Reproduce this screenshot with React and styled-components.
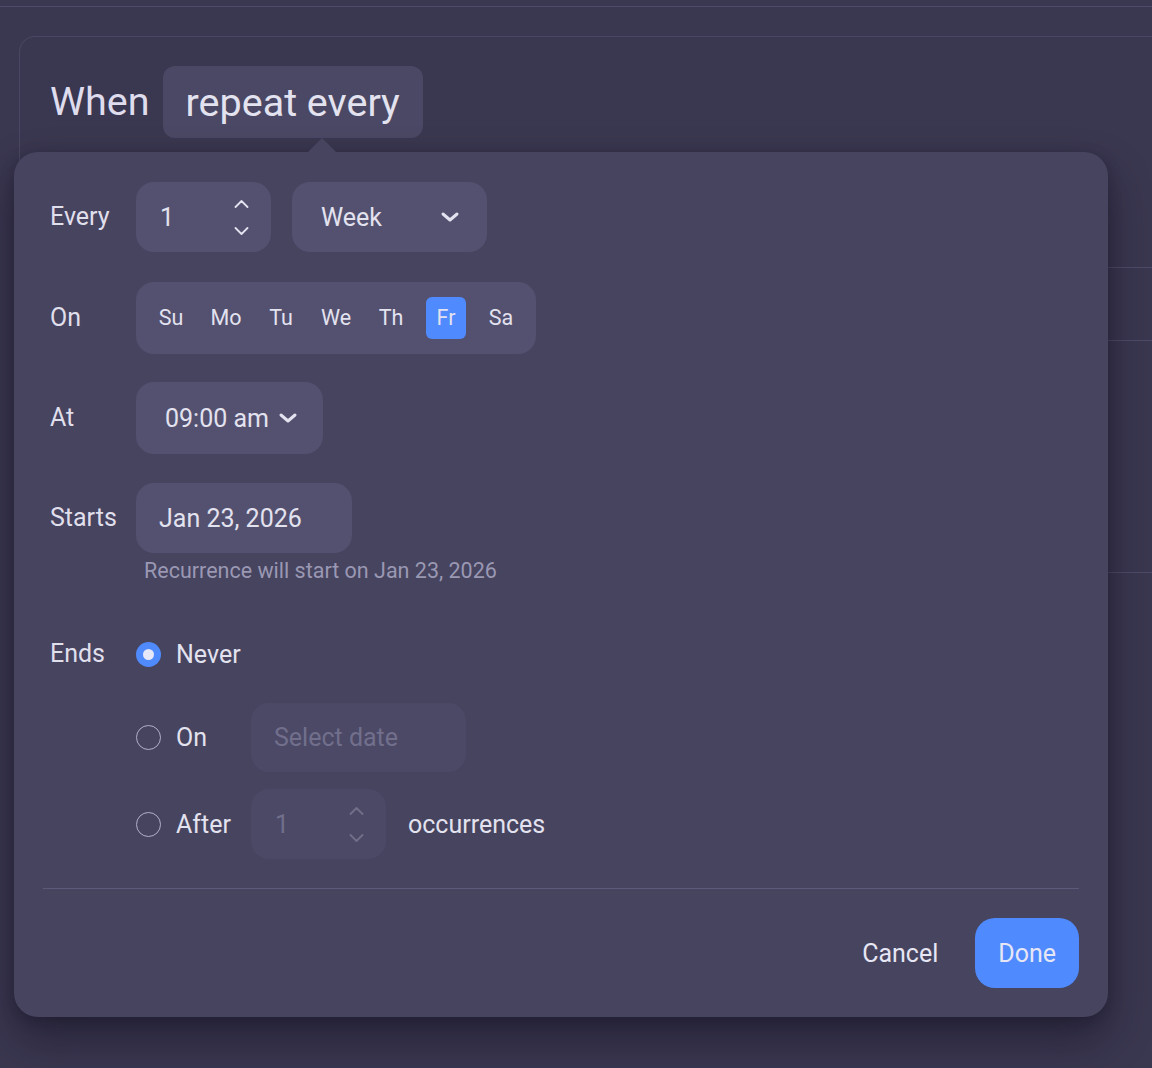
import React from 'react';
import styled, { createGlobalStyle } from 'styled-components';

const GlobalStyle = createGlobalStyle`
  html, body {
    margin: 0;
    padding: 0;
    background: #3a3750;
    font-family: Roboto, "Noto Sans", sans-serif;
    color: #e3e2ef;
  }
`;

const Page = styled.div`
  position: relative;
  width: 1152px;
  height: 1068px;
  overflow: hidden;
  background: #3a3750;
`;

const TopBar = styled.div`
  height: 6px;
  border-bottom: 1px solid #4f4c69;
`;

const Card = styled.section`
  margin: 29px 0 0 19px;
  border: 1px solid #4a4764;
  border-right: none;
  border-bottom: none;
  border-radius: 16px 0 0 0;
`;

const CardHeader = styled.div`
  display: flex;
  align-items: flex-start;
  gap: 13px;
  padding: 29px 0 0 30px;
  height: 230px;
  box-sizing: border-box;
`;

const When = styled.span`
  line-height: 72px;
  font-size: 39.5px;
  color: #dedced;
`;

const Chip = styled.span`
  display: inline-flex;
  align-items: center;
  height: 72px;
  padding: 0 23px;
  border-radius: 12px;
  background: #4a4864;
  font-size: 39.5px;
  color: #e3e2ef;
`;

const CardRow = styled.div`
  height: ${p => p.$h}px;
  border-top: 1px solid #4f4c69;
`;

const Popover = styled.div`
  position: absolute;
  left: 14px;
  top: 152px;
  width: 1094px;
  box-sizing: border-box;
  padding: 30px 29px 29px 36px;
  background: #46445f;
  border-radius: 24px;
  box-shadow: 0 22px 44px rgba(15, 13, 28, 0.45), 0 4px 14px rgba(15, 13, 28, 0.25);
`;

const Arrow = styled.div`
  position: absolute;
  left: 294px;
  top: -14px;
  width: 0;
  height: 0;
  border-left: 14px solid transparent;
  border-right: 14px solid transparent;
  border-bottom: 14px solid #46445f;
`;

const Row = styled.div`
  display: flex;
  align-items: ${p => (p.$top ? 'flex-start' : 'center')};
  margin-top: ${p => p.$mt || 0}px;
`;

const Label = styled.div`
  width: 86px;
  flex-shrink: 0;
  font-size: 25px;
  line-height: 30px;
  color: #e0dfec;
`;

const Field = styled.div`
  display: flex;
  align-items: center;
  justify-content: space-between;
  box-sizing: border-box;
  width: ${p => p.$w}px;
  height: ${p => p.$h || 70}px;
  margin-left: ${p => p.$ml || 0}px;
  padding: 0 ${p => p.$pr || 24}px 0 ${p => p.$pl || 24}px;
  border-radius: 18px;
  background: ${p => (p.$disabled ? '#4b4966' : '#53516f')};
  font-size: 25px;
  color: ${p => (p.$disabled ? '#716f8c' : '#e3e2ef')};
`;

const Spinner = styled.div`
  display: flex;
  flex-direction: column;
  gap: 19px;
  opacity: ${p => (p.$disabled ? 0.25 : 1)};
`;

const Days = styled.div`
  display: flex;
  gap: 15px;
  padding: 15px;
  border-radius: 18px;
  background: #53516f;
`;

const Day = styled.div`
  width: 40px;
  height: 42px;
  display: flex;
  align-items: center;
  justify-content: center;
  padding-bottom: 2px;
  box-sizing: border-box;
  border-radius: 6px;
  font-size: 21.5px;
  background: ${p => (p.$active ? '#4f8bff' : 'transparent')};
  color: #e3e2ef;
`;

const Hint = styled.div`
  margin: 5px 0 0 94px;
  font-size: 21.5px;
  color: #9a98b3;
`;

const Options = styled.div`
  display: flex;
  flex-direction: column;
`;

const Option = styled.div`
  display: flex;
  align-items: center;
  margin-top: ${p => p.$mt || 0}px;
`;

const RadioLabel = styled.label`
  display: flex;
  align-items: center;
  gap: 15px;
  width: 115px;
  height: 30px;
  font-size: 25px;
  color: #e3e2ef;
`;

const Radio = styled.span`
  width: 25px;
  height: 25px;
  box-sizing: border-box;
  border-radius: 50%;
  display: flex;
  align-items: center;
  justify-content: center;
  border: ${p => (p.$checked ? 'none' : '1px solid #b3b1c8')};
  background: ${p => (p.$checked ? '#4f8bff' : 'transparent')};
  &::after {
    content: '';
    display: ${p => (p.$checked ? 'block' : 'none')};
    width: 11px;
    height: 11px;
    border-radius: 50%;
    background: #e6e7f8;
  }
`;

const Occ = styled.span`
  margin-left: 22px;
  font-size: 25px;
  color: #e3e2ef;
`;

const Divider = styled.hr`
  margin: 29px 0 29px -7px;
  border: none;
  border-top: 1px solid #5c5a78;
`;

const Footer = styled.div`
  display: flex;
  justify-content: flex-end;
  align-items: center;
  gap: 14px;
`;

const Button = styled.button`
  height: 70px;
  padding: 0 23px;
  border: none;
  border-radius: 20px;
  font-family: inherit;
  font-size: 25px;
  color: #e6e6f5;
  background: ${p => (p.$primary ? '#4f8bff' : 'transparent')};
`;

const Chevron = ({ w = 20, h = 12, sw = 3 }) => (
  <svg width={w} height={h} viewBox={`0 0 ${w} ${h}`} fill="none">
    <polyline points={`${sw},${sw} ${w / 2},${h - sw} ${w - sw},${sw}`} stroke="#e3e2ef" strokeWidth={sw} strokeLinecap="round" strokeLinejoin="round" />
  </svg>
);

const Small = ({ up }) => (
  <svg width="15" height="8" viewBox="0 0 15 8" fill="none">
    <polyline points={up ? '1.5,7 7.5,1 13.5,7' : '1.5,1 7.5,7 13.5,1'} stroke="#e3e2ef" strokeWidth="1.8" strokeLinecap="round" strokeLinejoin="round" />
  </svg>
);

const days = ['Su', 'Mo', 'Tu', 'We', 'Th', 'Fr', 'Sa'];

export default function App() {
  return (
    <Page>
      <GlobalStyle />
      <TopBar />
      <Card>
        <CardHeader>
          <When>When</When>
          <Chip>repeat every</Chip>
        </CardHeader>
        <CardRow $h={72} />
        <CardRow $h={231} />
        <CardRow $h={400} />
      </Card>

      <Popover>
        <Arrow />
        <Row>
          <Label>Every</Label>
          <Field $w={135} $pr={22}>
            1
            <Spinner>
              <Small up />
              <Small />
            </Spinner>
          </Field>
          <Field $w={195} $ml={21} $pl={29} $pr={27}>
            Week
            <Chevron />
          </Field>
        </Row>

        <Row $mt={30}>
          <Label>On</Label>
          <Days>
            {days.map(d => (
              <Day key={d} $active={d === 'Fr'}>{d}</Day>
            ))}
          </Days>
        </Row>

        <Row $mt={28}>
          <Label>At</Label>
          <Field $w={187} $h={72} $pl={29} $pr={25}>
            09:00 am
            <Chevron />
          </Field>
        </Row>

        <Row $mt={29}>
          <Label>Starts</Label>
          <Field $w={216} $pl={23}>Jan 23, 2026</Field>
        </Row>
        <Hint>Recurrence will start on Jan 23, 2026</Hint>

        <Row $mt={56} $top>
          <Label>Ends</Label>
          <Options>
            <Option>
              <RadioLabel>
                <Radio $checked />
                Never
              </RadioLabel>
            </Option>
            <Option $mt={34}>
              <RadioLabel>
                <Radio />
                On
              </RadioLabel>
              <Field $w={215} $h={69} $pl={23} $disabled>Select date</Field>
            </Option>
            <Option $mt={17}>
              <RadioLabel>
                <Radio />
                After
              </RadioLabel>
              <Field $w={135} $pr={22} $disabled>
                1
                <Spinner $disabled>
                  <Small up />
                  <Small />
                </Spinner>
              </Field>
              <Occ>occurrences</Occ>
            </Option>
          </Options>
        </Row>

        <Divider />

        <Footer>
          <Button>Cancel</Button>
          <Button $primary>Done</Button>
        </Footer>
      </Popover>
    </Page>
  );
}
